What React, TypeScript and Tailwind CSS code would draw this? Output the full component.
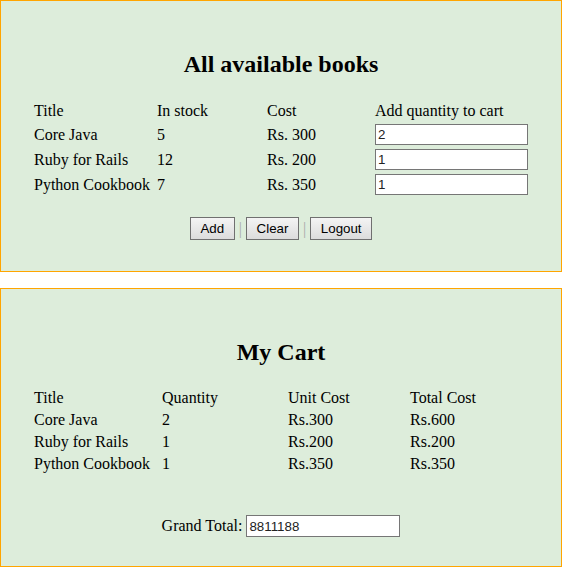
const BOOKS = [
  { title: 'Core Java', stock: 5, cost: 300, qty: '2' },
  { title: 'Ruby for Rails', stock: 12, cost: 200, qty: '1' },
  { title: 'Python Cookbook', stock: 7, cost: 350, qty: '1' },
]

const CART = [
  { title: 'Core Java', qty: 2, unit: 300 },
  { title: 'Ruby for Rails', qty: 1, unit: 200 },
  { title: 'Python Cookbook', qty: 1, unit: 350 },
]

const SERIF = "font-['Liberation_Serif','Times_New_Roman',serif]"
const SANS = "font-['Liberation_Sans',Arial,sans-serif]"

function Separator() {
  return <span className="px-[4px] text-[16px] leading-[18px] text-[#aaaaaa]">|</span>
}

function Btn({ label, w }: { label: string; w: string }) {
  return (
    <button
      className={`${SANS} ${w} h-[23px] border border-[#707070] bg-gradient-to-b from-[#f4f4f4] to-[#dcdcdc] text-[13.33px] text-black`}
    >
      {label}
    </button>
  )
}

export default function App() {
  return (
    <div className={`${SERIF} w-[562px] bg-white text-black`}>
      {/* Available books */}
      <section className="border border-[#ffa500] bg-[#ddeddb] pt-[49px] pb-[31px]">
        <h2 className="text-center text-[24px] font-bold leading-[28px]">All available books</h2>
        <table className="mx-auto mt-[21px] w-[500px] table-fixed border-separate border-spacing-[2px] text-[16px] leading-[18px]">
          <colgroup>
            <col className="w-[121px]" />
            <col className="w-[108px]" />
            <col className="w-[106px]" />
            <col className="w-[155px]" />
          </colgroup>
          <thead>
            <tr>
              <td className="p-px text-left font-normal">Title</td>
              <td className="p-px text-left font-normal">In stock</td>
              <td className="p-px text-left font-normal">Cost</td>
              <td className="whitespace-nowrap p-px text-left font-normal">Add quantity to cart</td>
            </tr>
          </thead>
          <tbody>
            {BOOKS.map((b) => (
              <tr key={b.title}>
                <td className="whitespace-nowrap p-px">{b.title}</td>
                <td className="p-px">{b.stock}</td>
                <td className="p-px">Rs. {b.cost}</td>
                <td className="p-px">
                  <input
                    defaultValue={b.qty}
                    className={`${SANS} block h-[21px] w-[153px] border border-[#767676] bg-white px-[2px] text-[13.33px] text-[#222]`}
                  />
                </td>
              </tr>
            ))}
          </tbody>
        </table>
        <div className="mt-[19px] flex items-center justify-center">
          <Btn label="Add" w="w-[45px]" />
          <Separator />
          <Btn label="Clear" w="w-[53px]" />
          <Separator />
          <Btn label="Logout" w="w-[62px]" />
        </div>
      </section>

      {/* Cart */}
      <section className="mt-[16px] border border-[#ffa500] bg-[#ddeddb] pt-[49px] pb-[29px]">
        <h2 className="text-center text-[24px] font-bold leading-[28px]">My Cart</h2>
        <table className="mx-auto mt-[20px] w-[500px] table-fixed border-separate border-spacing-[2px] text-[16px] leading-[18px]">
          <colgroup>
            <col className="w-[126px]" />
            <col className="w-[124px]" />
            <col className="w-[120px]" />
            <col className="w-[120px]" />
          </colgroup>
          <thead>
            <tr>
              <td className="p-px">Title</td>
              <td className="p-px">Quantity</td>
              <td className="p-px">Unit Cost</td>
              <td className="p-px">Total Cost</td>
            </tr>
          </thead>
          <tbody>
            {CART.map((c) => (
              <tr key={c.title}>
                <td className="whitespace-nowrap p-px">{c.title}</td>
                <td className="p-px">{c.qty}</td>
                <td className="p-px">Rs.{c.unit}</td>
                <td className="p-px">Rs.{c.unit * c.qty}</td>
              </tr>
            ))}
          </tbody>
        </table>
        <div className="mt-[39px] flex items-baseline justify-center text-[16px] leading-[18px]">
          <span className="mr-[4px]">Grand Total:</span>
          <input
            defaultValue="8811188"
            className={`${SANS} h-[22px] w-[154px] border border-[#767676] bg-white px-[2px] text-[13.33px] text-[#222]`}
          />
        </div>
      </section>
    </div>
  )
}
